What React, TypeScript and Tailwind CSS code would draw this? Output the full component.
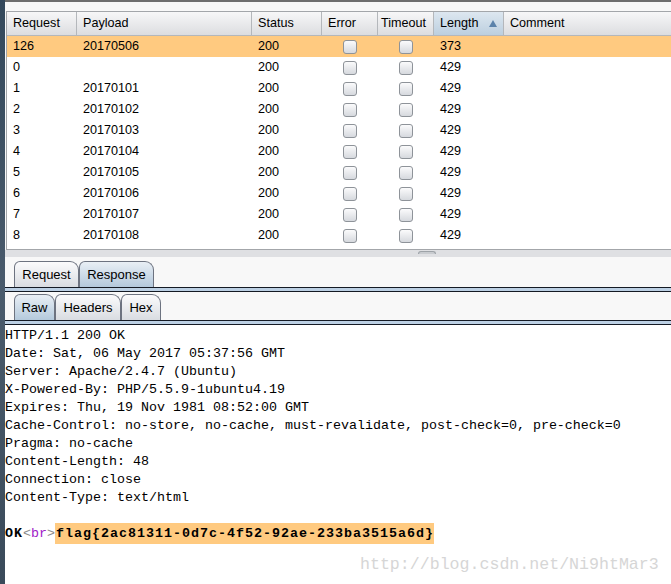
import React from "react";

const rows = [
	{ req: "126", payload: "20170506", len: "373", hl: true },
	{ req: "0", payload: "", len: "429" },
	{ req: "1", payload: "20170101", len: "429" },
	{ req: "2", payload: "20170102", len: "429" },
	{ req: "3", payload: "20170103", len: "429" },
	{ req: "4", payload: "20170104", len: "429" },
	{ req: "5", payload: "20170105", len: "429" },
	{ req: "6", payload: "20170106", len: "429" },
	{ req: "7", payload: "20170107", len: "429" },
	{ req: "8", payload: "20170108", len: "429" },
];

const response = [
	"HTTP/1.1 200 OK",
	"Date: Sat, 06 May 2017 05:37:56 GMT",
	"Server: Apache/2.4.7 (Ubuntu)",
	"X-Powered-By: PHP/5.5.9-1ubuntu4.19",
	"Expires: Thu, 19 Nov 1981 08:52:00 GMT",
	"Cache-Control: no-store, no-cache, must-revalidate, post-check=0, pre-check=0",
	"Pragma: no-cache",
	"Content-Length: 48",
	"Connection: close",
	"Content-Type: text/html",
];

const Check = () => (
	<div className="w-[14px] h-[14px] rounded-[3px] border border-[#8e9399] bg-gradient-to-b from-[#fbfbfc] to-[#d6d9de]" />
);

const HeadCell = (props: { w: string; children?: React.ReactNode; active?: boolean }) => (
	<div
		className={`${props.w} h-full flex items-center pl-[6px] border-r border-[#b4b7bb] relative ${
			props.active ? "bg-gradient-to-b from-[#dde7f0] to-[#bccfdf]" : ""
		}`}
	>
		{props.children}
	</div>
);

const Tab = (props: { label: string; w: string; active?: boolean }) => (
	<div
		className={`${props.w} h-[26px] flex items-center justify-center rounded-t-[6px] rounded-tr-[9px] border border-b-0 border-[#6d7380] text-[13px] text-black ${
			props.active
				? "bg-gradient-to-b from-[#e9eff5] to-[#b4c9dc]"
				: "bg-gradient-to-b from-[#fbfbfc] to-[#d9dce1]"
		}`}
	>
		{props.label}
	</div>
);

const PanelLine = () => (
	<div className="h-[5px] border-y border-[#141a24] bg-[#bcd0e4]" />
);

export default function App() {
	return (
		<div
			className="w-[671px] h-[584px] overflow-hidden flex bg-[#f8f8f8] relative"
			style={{ fontFamily: '"Liberation Sans", Arial, sans-serif' }}
		>
			<div className="w-[5px] h-full bg-gradient-to-b from-[#34495c] via-[#4a5b6c] to-[#3a4a5a] shrink-0" />
			<div className="flex-1 flex flex-col min-w-0">
				<div className="h-[2px] bg-[#6e6e6e]" />
				<div className="h-[9px]" />
				{/* results table */}
				<div className="ml-[1px] h-[239px] border border-r-0 border-[#a3a6aa] bg-white text-[12.6px] text-black">
					<div className="h-[24px] flex border-b border-[#b4b7bb] bg-gradient-to-b from-[#f7f7f8] to-[#dcdde0]">
						<HeadCell w="w-[70px]">Request</HeadCell>
						<HeadCell w="w-[175px]">Payload</HeadCell>
						<HeadCell w="w-[70px]">Status</HeadCell>
						<HeadCell w="w-[56px]">Error</HeadCell>
						<div className="w-[56px] h-full flex items-center pl-[3px] border-r border-[#b4b7bb]">Timeout</div>
						<HeadCell w="w-[70px]" active>
							Length
							<span className="absolute right-[6px] top-[8px] w-0 h-0 border-x-[4px] border-x-transparent border-b-[7px] border-b-[#5b82aa]" />
						</HeadCell>
						<div className="flex-1 flex items-center pl-[6px]">Comment</div>
					</div>
					{rows.map((r) => (
						<div
							key={r.req}
							className={`h-[21px] flex items-center ${r.hl ? "bg-[#ffca80]" : ""}`}
						>
							<div className="w-[70px] pl-[6px]">{r.req}</div>
							<div className="w-[175px] pl-[6px]">{r.payload}</div>
							<div className="w-[70px] pl-[6px]">200</div>
							<div className="w-[56px] flex justify-center">
								<Check />
							</div>
							<div className="w-[56px] flex justify-center">
								<Check />
							</div>
							<div className="w-[70px] pl-[6px]">{r.len}</div>
						</div>
					))}
				</div>
				{/* split bar */}
				<div className="h-[7px] bg-[#dfe0e3] relative">
					<div className="absolute left-[413px] top-[1px] w-[18px] h-[3px] rounded-t-[3px] border border-b-0 border-[#9ea3a8] bg-[#c9ccd0]" />
				</div>
				<div className="h-[4px]" />
				<div className="flex pl-[9px]">
					<Tab label="Request" w="w-[65px]" />
					<Tab label="Response" w="w-[75px]" active />
				</div>
				<PanelLine />
				<div className="h-[2px]" />
				<div className="flex pl-[9px]">
					<Tab label="Raw" w="w-[41px]" active />
					<Tab label="Headers" w="w-[66px]" />
					<Tab label="Hex" w="w-[40px]" />
				</div>
				<PanelLine />
				<div
					className="flex-1 bg-white pt-[2px] text-[13.33px] leading-[18px] text-black whitespace-pre"
					style={{ fontFamily: '"Liberation Mono", "Courier New", monospace' }}
				>
					{response.map((l, i) => (
						<div key={i}>{l}</div>
					))}
					<div>&nbsp;</div>
					<div className="flex items-center h-[21px] mt-[-2px]">
						<span className="font-bold tracking-[1px]">OK</span>
						<span className="text-[#8a8a8a]">&lt;</span>
						<span className="text-[#a020c8]">br</span>
						<span className="text-[#8a8a8a]">&gt;</span>
						<span className="font-bold tracking-[1px] bg-[#ffca80] h-[21px] leading-[21px] pl-[1px]">
							flag{"{"}2ac81311-0d7c-4f52-92ae-233ba3515a6d{"}"}
						</span>
					</div>
				</div>
			</div>
			<div
				className="absolute left-[360px] top-[553px] text-[16.6px] leading-[24px] text-[#d6d6d6]"
				style={{ fontFamily: '"Liberation Mono", "Courier New", monospace' }}
			>
				http://blog.csdn.net/Ni9htMar3
			</div>
		</div>
	);
}
